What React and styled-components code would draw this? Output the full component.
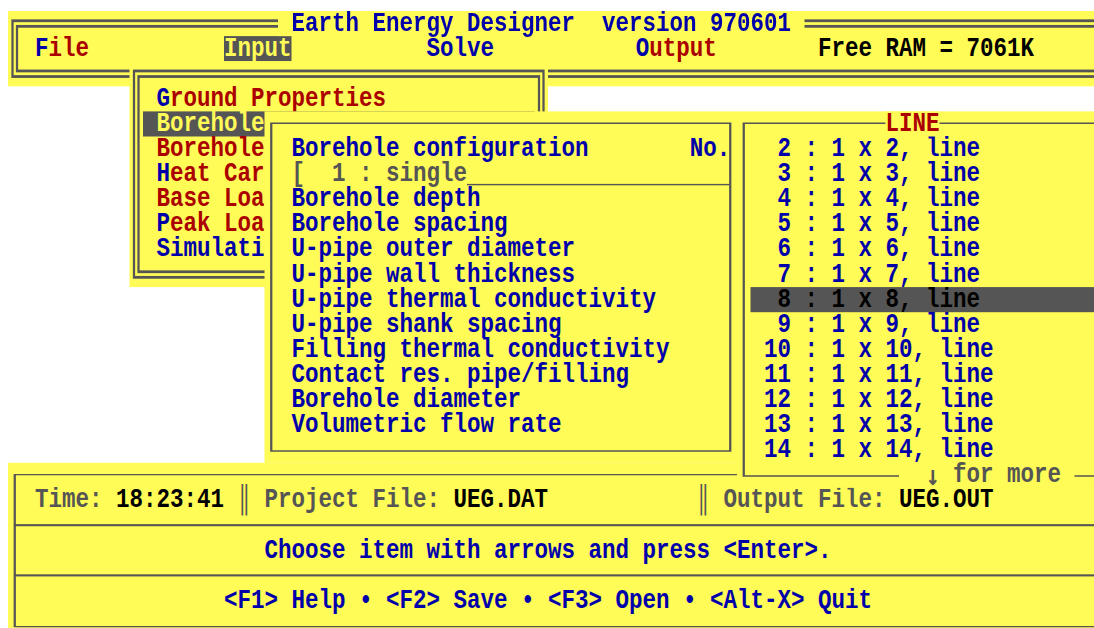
import React from 'react';
import styled, { createGlobalStyle, css } from 'styled-components';

// one text cell of the 80x25 screen, before the screen is stretched
const CW = 12;
const RH = 18;

const YELLOW = '#fffb57';
const BLUE = '#0000aa';
const RED = '#aa0000';
const GRAY = '#555555';
const INK = '#000000';

// the form window hides every menu label past this many characters
const MENU_VISIBLE = 8;

const GlobalStyle = createGlobalStyle`
  html, body {
    margin: 0;
    padding: 0;
    background: #fff;
  }
`;

// the monitor: a fixed area the stretched text screen is shown through
const Monitor = styled.div`
  width: 1094px;
  height: 628px;
  box-sizing: border-box;
  padding: 11px 0 0 8px;
  overflow: hidden;
  background: #fff;
`;

const Screen = styled.div`
  position: relative;
  display: flex;
  flex-direction: column;
  width: ${82 * CW}px;
  height: ${25 * RH}px;
  transform: scale(1.125, 1.3944);
  transform-origin: 0 0;
  background: #fff;
  font-family: "Liberation Mono", "DejaVu Sans Mono", monospace;
  font-weight: bold;
  font-size: 20px;
  line-height: ${RH}px;
  white-space: pre;
`;

const Frame = styled.div`
  position: absolute;
  pointer-events: none;
  ${({ $double }) =>
    $double
      ? css`
          inset: ${RH / 2 - 3}px ${CW / 2 - 3}px;
          border: 6px double ${GRAY};
        `
      : css`
          inset: ${RH / 2 - 0.75}px ${CW / 2 - 1}px;
          border-style: solid;
          border-color: ${GRAY};
          border-width: 1.5px 2px;
        `}
`;

const BorderLabel = styled.span`
  position: absolute;
  left: ${p => p.$col * CW}px;
  ${p => (p.$bottom ? 'bottom: 0;' : 'top: 0;')}
  height: ${RH}px;
  background: ${YELLOW};
  color: ${p => p.$c};
`;

const Arrow = styled.span`
  display: inline-block;
  width: ${CW}px;
  line-height: ${RH}px;
  vertical-align: top;
  text-align: center;
  font-family: "DejaVu Sans Mono", monospace;
`;

const TextRow = styled.div`
  display: grid;
  grid-template-columns: repeat(${p => p.$cols}, ${CW}px);
  height: ${RH}px;
`;

const Cell = styled.span`
  grid-row: 1;
  grid-column: ${p => `${p.$col + 1} / span ${p.$span || 1}`};
  justify-self: ${p => (p.$span ? 'stretch' : 'start')};
  margin-left: ${p => (p.$nudge || 0) * CW}px;
  color: ${p => p.$c || 'inherit'};
  background: ${p => p.$bg || 'transparent'};
`;

const Hot = styled.span`
  color: ${BLUE};
`;

const Rule = styled.span`
  grid-row: 1;
  grid-column: ${p => `${p.$col + 1} / span ${p.$span}`};
  align-self: end;
  height: 1.5px;
  margin: 0 ${-CW / 2}px 1px 0;
  background: ${GRAY};
`;

const MenuBar = styled.header`
  position: relative;
  flex: none;
  height: ${3 * RH}px;
  box-sizing: border-box;
  padding-top: ${RH}px;
  background: ${YELLOW};
`;

const Desktop = styled.main`
  position: relative;
  z-index: 1;
  flex: 1;
`;

const Window = styled.section`
  position: absolute;
  left: ${p => p.$col * CW}px;
  top: ${p => p.$row * RH}px;
  width: ${p => p.$cols * CW}px;
  height: ${p => p.$rows * RH}px;
  box-sizing: border-box;
  padding-top: ${RH}px;
  background: ${YELLOW};
`;

const StatusPanel = styled.footer`
  position: relative;
  flex: none;
  height: ${7 * RH}px;
  box-sizing: border-box;
  padding-top: ${RH}px;
  background: ${YELLOW};
`;

const Divider = styled.div`
  height: ${RH}px;
  margin-left: ${CW / 2}px;
  background: linear-gradient(${GRAY}, ${GRAY}) center / 100% 1.5px no-repeat;
`;

const MENU = [
  { label: 'File', col: 2 },
  { label: 'Input', col: 16, open: true },
  { label: 'Solve', col: 31, plain: true },
  { label: 'Output', col: 46, nudge: 0.5 },
];

const INPUT_ITEMS = [
  { label: 'Ground Properties', hot: true, full: true },
  { label: 'Borehole and Pipe', active: true },
  { label: 'Borehole Resistance' },
  { label: 'Heat Carrier Fluid', hot: true },
  { label: 'Base Load' },
  { label: 'Peak Load', hot: true },
  { label: 'Simulation Period', plain: true },
];

const FIELDS = [
  'Borehole depth',
  'Borehole spacing',
  'U-pipe outer diameter',
  'U-pipe wall thickness',
  'U-pipe thermal conductivity',
  'U-pipe shank spacing',
  'Filling thermal conductivity',
  'Contact res. pipe/filling',
  'Borehole diameter',
  'Volumetric flow rate',
];

const LINES = Array.from({ length: 13 }, (_, i) => i + 2);

function Label({ text, hot, plain }) {
  if (plain) return <span style={{ color: BLUE }}>{text}</span>;
  if (!hot) return text;
  return (
    <>
      <Hot>{text[0]}</Hot>
      {text.slice(1)}
    </>
  );
}

function Menu() {
  return (
    <MenuBar>
      <Frame $double />
      <BorderLabel $col={20} $c={BLUE}> Earth Energy Designer  version 970601 </BorderLabel>
      <TextRow $cols={82}>
        {MENU.map(m =>
          m.open ? (
            <Cell key={m.label} $col={m.col} $span={m.label.length} $bg={GRAY} $c={YELLOW}>
              {m.label}
            </Cell>
          ) : (
            <Cell key={m.label} $col={m.col} $nudge={m.nudge} $c={RED}>
              <Label text={m.label} hot={!m.plain} plain={m.plain} />
            </Cell>
          )
        )}
        <Cell $col={60} $c={INK}>Free RAM = 7061K</Cell>
      </TextRow>
    </MenuBar>
  );
}

function InputMenu() {
  return (
    <Window $col={9} $row={-1} $cols={31} $rows={9}>
      <Frame $double />
      {INPUT_ITEMS.map(item => {
        const text = item.full ? item.label : item.label.slice(0, MENU_VISIBLE);
        return (
          <TextRow key={item.label} $cols={31}>
            {item.active ? (
              <Cell $col={1} $span={29} $bg={GRAY} $c={YELLOW}>
                {' ' + text}
              </Cell>
            ) : (
              <Cell $col={2} $c={RED}>
                <Label text={text} hot={item.hot} plain={item.plain} />
              </Cell>
            )}
          </TextRow>
        );
      })}
    </Window>
  );
}

function BoreholeForm() {
  return (
    <Window $col={19} $row={1} $cols={35} $rows={14}>
      <Frame />
      <TextRow $cols={35}>
        <Cell $col={2} $c={BLUE}>Borehole configuration</Cell>
        <Cell $col={31} $nudge={0.5} $c={BLUE}>No.</Cell>
      </TextRow>
      <TextRow $cols={35}>
        <Cell $col={2} $c={GRAY}>[  1 : single</Cell>
        <Rule $col={15} $span={19} />
      </TextRow>
      {FIELDS.map(f => (
        <TextRow key={f} $cols={35}>
          <Cell $col={2} $c={BLUE}>{f}</Cell>
        </TextRow>
      ))}
    </Window>
  );
}

function LinePicker() {
  return (
    <Window $col={54} $row={1} $cols={28} $rows={15}>
      <Frame />
      <BorderLabel $col={11} $c={RED}>LINE</BorderLabel>
      {LINES.map(n => (
        <TextRow key={n} $cols={28}>
          <Cell
            $col={1}
            $span={27}
            $bg={n === 8 ? GRAY : 'transparent'}
            $c={n === 8 ? INK : BLUE}
          >
            {` ${String(n).padStart(2)} : 1 x ${n}, line`}
          </Cell>
        </TextRow>
      ))}
      <BorderLabel $bottom $col={12} $c={GRAY}>
        {'  '}
        <Arrow>{'\u2193'}</Arrow>
        {' for more '}
      </BorderLabel>
    </Window>
  );
}

function Status() {
  return (
    <StatusPanel>
      <Frame />
      <TextRow $cols={82}>
        <Cell $col={2} $c={GRAY}>Time:</Cell>
        <Cell $col={8} $c={INK}>18:23:41</Cell>
        <Cell $col={17} $c={GRAY}>{'\u2551'}</Cell>
        <Cell $col={19} $c={GRAY}>Project File:</Cell>
        <Cell $col={33} $c={INK}>UEG.DAT</Cell>
        <Cell $col={51} $c={GRAY}>{'\u2551'}</Cell>
        <Cell $col={53} $c={GRAY}>Output File:</Cell>
        <Cell $col={66} $c={INK}>UEG.OUT</Cell>
      </TextRow>
      <Divider />
      <TextRow $cols={82}>
        <Cell $col={19} $c={BLUE}>Choose item with arrows and press &lt;Enter&gt;.</Cell>
      </TextRow>
      <Divider />
      <TextRow $cols={82}>
        <Cell $col={16} $c={BLUE}>
          {'<F1> Help \u2022 <F2> Save \u2022 <F3> Open \u2022 <Alt-X> Quit'}
        </Cell>
      </TextRow>
    </StatusPanel>
  );
}

export default function App() {
  return (
    <>
      <GlobalStyle />
      <Monitor>
        <Screen>
          <Menu />
          <Desktop>
            <InputMenu />
            <BoreholeForm />
            <LinePicker />
          </Desktop>
          <Status />
        </Screen>
      </Monitor>
    </>
  );
}
